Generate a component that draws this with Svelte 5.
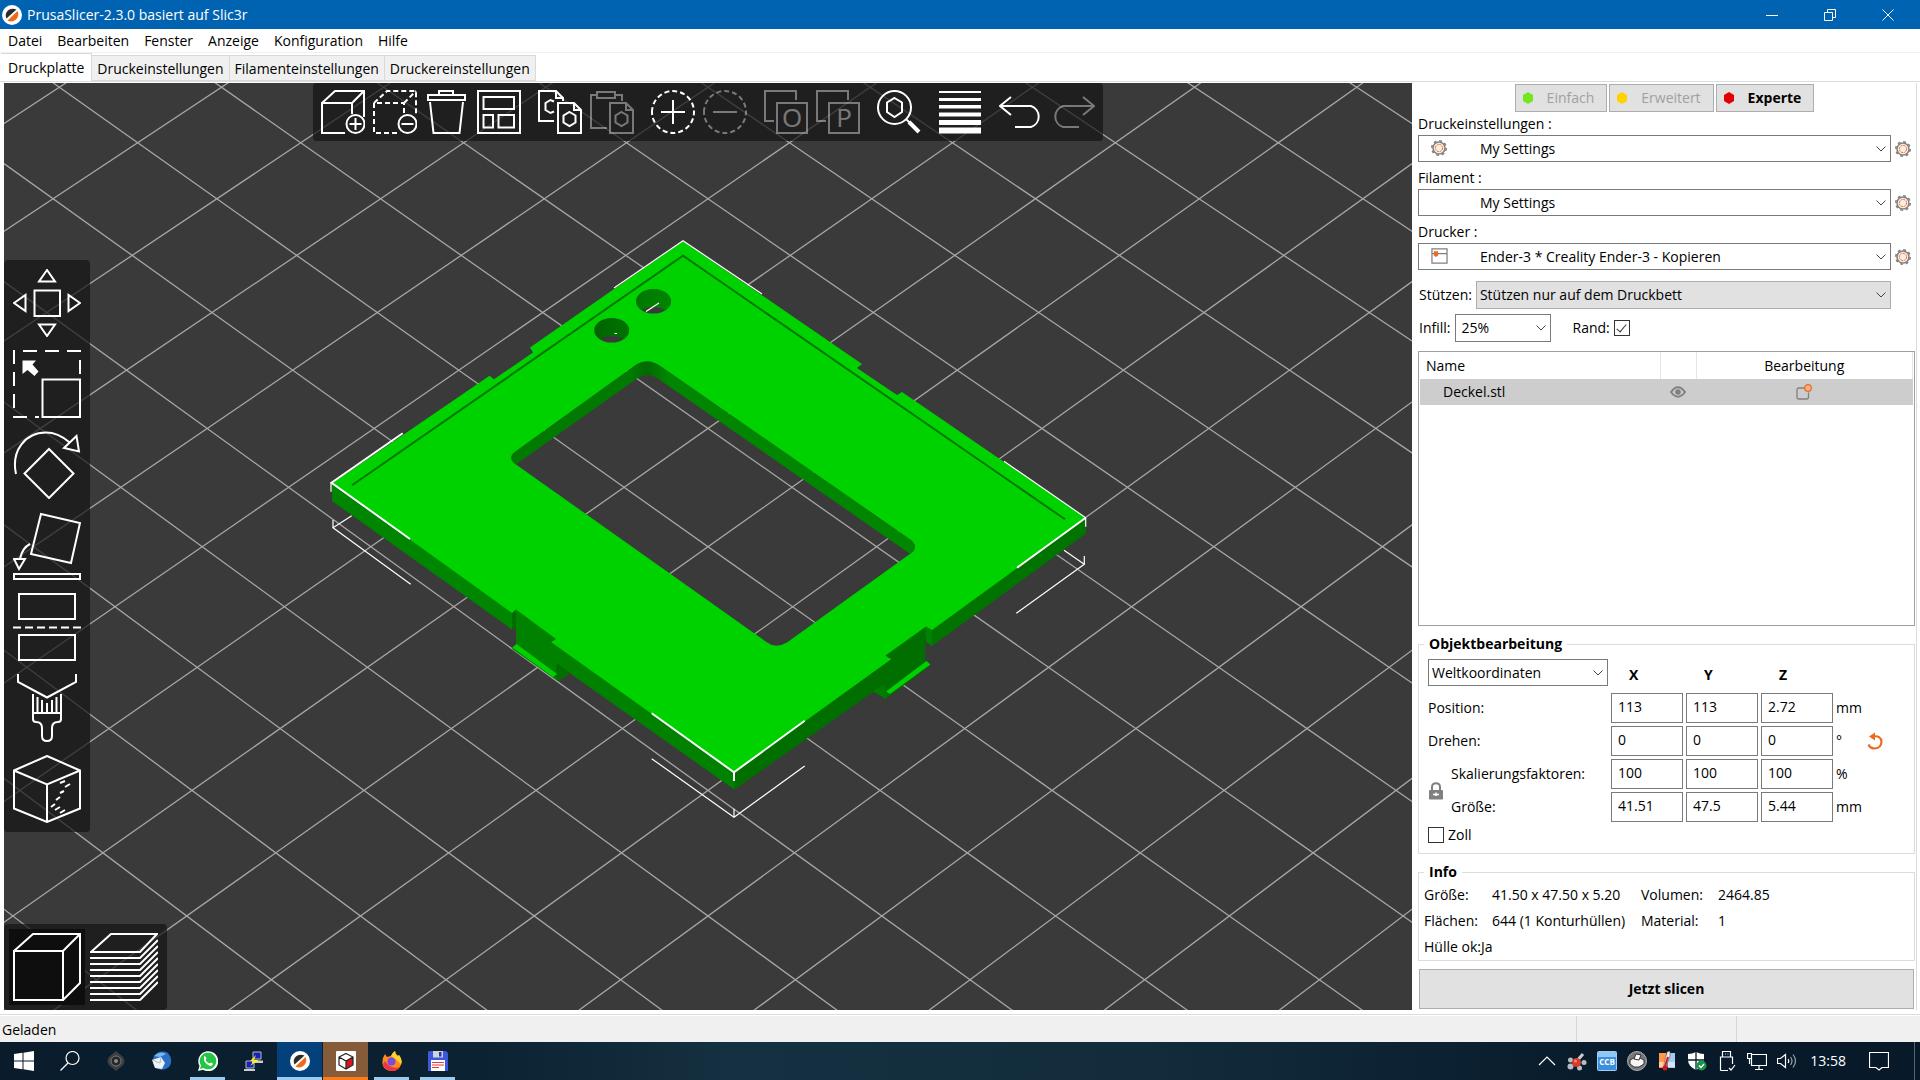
<script lang="ts">
	type Stroke = { d: string; dash?: string; fill?: boolean; heavy?: boolean };
	type Tool = { name: string; strokes: Stroke[]; off?: boolean; letter?: string };

	const menus = ['Datei', 'Bearbeiten', 'Fenster', 'Anzeige', 'Konfiguration', 'Hilfe'];
	const tabs = ['Druckplatte', 'Druckeinstellungen', 'Filamenteinstellungen', 'Druckereinstellungen'];

	let activeTab = $state('Druckplatte');
	let mode = $state('Experte');
	let support = $state('Stützen nur auf dem Druckbett');
	let infill = $state('25%');
	let brim = $state(true);
	let inches = $state(false);

	const modes = [
		{ name: 'Einfach', color: '#73e61e' },
		{ name: 'Erweitert', color: '#ffd200' },
		{ name: 'Experte', color: '#e30000' }
	];

	const presets = [
		{ id: 'print', label: 'Druckeinstellungen :', value: 'My Settings', icon: 'gear' },
		{ id: 'filament', label: 'Filament :', value: 'My Settings', icon: '' },
		{ id: 'printer', label: 'Drucker :', value: 'Ender-3 * Creality Ender-3 - Kopieren', icon: 'printer' }
	];

	const axes = ['X', 'Y', 'Z'];
	let rows = $state([
		{ label: 'Position:', values: ['113', '113', '2.72'], unit: 'mm' },
		{ label: 'Drehen:', values: ['0', '0', '0'], unit: '°' },
		{ label: 'Skalierungsfaktoren:', values: ['100', '100', '100'], unit: '%' },
		{ label: 'Größe:', values: ['41.51', '47.5', '5.44'], unit: 'mm' }
	]);

	// print bed grid, seen from a corner: k runs down the screen, u across it
	function bedPoint(u: number, k: number) {
		const w = 1 - 0.00496 * k;
		return [708 + (168.6 * u) / w, (546.7 + 57 * k) / w];
	}

	function bedLine(n: number, dir: number) {
		const [x1, y1] = bedPoint(n - dir * 5, -10);
		const [x2, y2] = bedPoint(n + dir * 5, 10);
		return `M${x1.toFixed(1)} ${y1.toFixed(1)}L${x2.toFixed(1)} ${y2.toFixed(1)}`;
	}

	let grid = '';
	for (let n = -12; n <= 12; n++) {
		grid += bedLine(n, 1) + bedLine(n, -1);
	}

	const outline =
		'M683 241L862 364L857 368L897 395L902 392L1086 518L932 630L926 626.5L885.5 655.5L890.7 659.5L734 772.5L551 642L556 639L516 609.5L512 613L332 483.5L489.5 375.7L494 379.3L533 352.5L530 347.5Z';
	const cutout =
		'M637 364Q648 357.500 660 365.700L911 540Q918 546 913 551.700L787 642.500Q776 649 767 642.500L513.500 462.700Q508 457 515 451.700Z';
	const holes =
		'M636 301.300a17.500 12.300 0 1 0 35 0a17.500 12.300 0 1 0 -35 0ZM594.200 330.300a17.500 12.300 0 1 0 35 0a17.500 12.300 0 1 0 -35 0Z';

	const doc = 'M20 13H36L43 20V43H20ZM36 13V20H43M31.5 22L37.5 25.5V32.5L31.5 36L25.5 32.5V25.5Z';

	const topGroups: Tool[][] = [
		[
			{ name: 'Hinzufügen', strokes: [{ d: 'M24 43H1V13H31V24M1 13L14 1H43V27M31 13L43 1M43.500 34a9 9 0 1 1 -18 0a9 9 0 1 1 18 0M28.500 34H40.500M34.500 28V40' }] },
			{ name: 'Löschen', strokes: [{ d: 'M24 43H1V13H31V24M1 13L14 1H43V25M31 13L43 1', dash: '5 3' }, { d: 'M43.500 34a9 9 0 1 1 -18 0a9 9 0 1 1 18 0M28.500 34H40.500' }] },
			{ name: 'Alle löschen', strokes: [{ d: 'M3 5H40V10H3ZM14 5V1H28V5M5 12L8.500 43H34.500L38 12' }] },
			{ name: 'Anordnen', strokes: [{ d: 'M1 1H43V43H1ZM6.500 7H37V19H6.500ZM6.500 25H16V37.500H6.500ZM21.500 25H37V37.500H21.500Z' }] }
		],
		[
			{ name: 'Kopieren', strokes: [{ d: 'M16 31H1V1H18L25 8V11M18 1V8H25M16 11.500L12.500 10L7.500 13V20L12.500 23L16 21.500' }, { d: doc }] },
			{ name: 'Einfügen', off: true, strokes: [{ d: 'M17 38H1V5H7M25 5H32V11M7 2H25V8H7Z' }, { d: doc }] }
		],
		[
			{ name: 'Instanz hinzufügen', strokes: [{ d: 'M1 22a21 21 0 1 1 42 0a21 21 0 1 1 -42 0', dash: '5 3' }, { d: 'M10 22H34M22 10V34' }] },
			{ name: 'Instanz entfernen', off: true, strokes: [{ d: 'M1 22a21 21 0 1 1 42 0a21 21 0 1 1 -42 0', dash: '5 3' }, { d: 'M10 22H34' }] }
		],
		[
			{ name: 'In Objekte trennen', off: true, letter: 'O', strokes: [{ d: 'M10 31H1V1H32V10M13 13H43V43H13Z' }] },
			{ name: 'In Teile trennen', off: true, letter: 'P', strokes: [{ d: 'M10 31H1V1H32V10M13 13H43V43H13Z' }] }
		],
		[{ name: 'Suche', strokes: [{ d: 'M1 17.500a16.500 16.500 0 1 1 33 0a16.500 16.500 0 1 1 -33 0M17.500 8L25 12.500V22L17.500 27L10 22V12.500ZM29 29L33 33' }, { d: 'M32 32L42 42', heavy: true }] }],
		[{ name: 'Variable Schichthöhe', strokes: [{ d: 'M1 1H43V3H1ZM1 8H43V11H1ZM1 15H43V18.500H1ZM1 22.500H43V26.500H1ZM1 30H43V35H1ZM1 37.500H43V43.500H1Z', fill: true }] }],
		[
			{ name: 'Rückgängig', strokes: [{ d: 'M12 7L1 16L12 25M1 16H32a11 11 0 0 1 0 21H16' }] },
			{ name: 'Wiederholen', off: true, strokes: [{ d: 'M32 7L43 16L32 25M43 16H12a11 11 0 0 0 0 21H28' }] }
		]
	];

	const sideTools: Tool[] = [
		{ name: 'Bewegen', strokes: [{ d: 'M21.500 21.500H47V47H21.500ZM34 1L26 12.500H42ZM34 67L26 55.500H42ZM1 34L12.500 26V42ZM67 34L55.500 26V42Z' }] },
		{ name: 'Skalieren', strokes: [{ d: 'M67 24V1H1V67H26', dash: '14 8' }, { d: 'M29.500 29.500H67V67H29.500Z' }, { d: 'M9.500 10.500H23L19.500 14.500L25.500 21.500L21.500 26L14.500 20L9.500 24Z', fill: true }] },
		{ name: 'Drehen', strokes: [{ d: 'M36 18L60.500 42.500L36 67L11.500 42.500ZM3 43C-2 20 12 1.500 33 1.500C42 1.500 49 5 56 11M63.500 5L51 17L66 20.500Z' }] },
		{ name: 'Auf Fläche legen', strokes: [{ d: 'M28 2L67 11L58 51L18 42ZM17 32Q9 36 7 47M1 47H12L6 57ZM1 62H67V67H1Z' }] },
		{ name: 'Schneiden', strokes: [{ d: 'M6 1H62V26H6ZM6 42H62V67H6Z' }, { d: 'M0 34.500H68', dash: '8 4' }] },
		{ name: 'Aufmalen', strokes: [{ d: 'M5 0V8L34 23.500L63 8V0M20 20V45Q20 48 23 48Q29 48 29 54V62Q29 67 34 67Q39 67 39 62V54Q39 48 45 48Q48 48 48 45V20M20 39H48M24.500 23V39M29 26V39M34 29V39M39 26V39M43.500 23V39' }] },
		{ name: 'Naht', strokes: [{ d: 'M34 1L67 15.500V53.500L34 67L1 53.500V15.500ZM1 15.500L34 29.500L67 15.500M34 29.500V67M47 28L52 26M52 32L57 29M47 38L51 36M43 45L47 42M38 52L42 49M42 55L47 52M47 58L52 55' }] }
	];

	const slabs = [25, 31, 37, 43, 49, 55, 61, 67].map((y) => `M0 ${y}H50L68 ${y - 18}`).join('');
</script>

{#snippet chevron()}
	<svg class="chevron" viewBox="0 0 10 6" aria-hidden="true"><path d="M.5 .5L5 5L9.5 .5" /></svg>
{/snippet}

{#snippet gear()}
	<svg class="gear" viewBox="0 0 16 16" aria-hidden="true">
		<circle cx="8" cy="8" r="7.200" fill="none" stroke="#808080" stroke-width="1.600" stroke-dasharray="2.800 2.850" />
		<circle cx="8" cy="8" r="6" fill="#fbeee6" stroke="#808080" stroke-width="1.500" />
		<circle cx="8" cy="8" r="3.600" fill="none" stroke="#ed6b21" stroke-dasharray="2 .8" />
	</svg>
{/snippet}

{#snippet prusa()}
	<svg viewBox="0 0 20 20" aria-hidden="true">
		<circle cx="10" cy="10" r="10" fill="#fff" />
		<path d="M4.500 13.500C1.500 7 8 1.500 14.500 4.500Z" fill="#2b2b2b" />
		<path d="M5.500 15.500C12 19 18.500 12 15.500 6Z" fill="#ed6b21" />
	</svg>
{/snippet}

{#snippet toolIcon(tool: Tool, size: number)}
	<svg viewBox="0 0 {size} {size}" aria-hidden="true">
		{#each tool.strokes as s}
			<path d={s.d} stroke-dasharray={s.dash} class:solid={s.fill} class:heavy={s.heavy} />
		{/each}
		{#if tool.letter}
			<text x="28" y="37" text-anchor="middle">{tool.letter}</text>
		{/if}
	</svg>
{/snippet}

<div class="desktop">
	<header class="titlebar">
		<span class="logo">{@render prusa()}</span>
		<span class="title">PrusaSlicer-2.3.0 basiert auf Slic3r</span>
		<div class="window-buttons">
			<button aria-label="Minimieren"><svg viewBox="0 0 12 12"><path d="M0 6.500H12" /></svg></button>
			<button aria-label="Verkleinern"><svg viewBox="0 0 12 12"><path d="M.5 3.500H8.500V11.500H.5ZM3.500 3.500V.5H11.500V8.500H8.500" /></svg></button>
			<button aria-label="Schließen"><svg viewBox="0 0 12 12"><path d="M.5 .5L11.500 11.500M11.500 .5L.5 11.500" /></svg></button>
		</div>
	</header>

	<nav class="menubar">
		{#each menus as item}
			<button>{item}</button>
		{/each}
	</nav>

	<div class="tabs" role="tablist">
		{#each tabs as tab}
			<button role="tab" aria-selected={tab === activeTab} class:active={tab === activeTab} onclick={() => (activeTab = tab)}>{tab}</button>
		{/each}
	</div>

	<main>
		<section class="viewport">
			<svg class="scene" viewBox="4 83 1408 927" preserveAspectRatio="xMidYMid slice" role="img" aria-label="Deckel.stl">
				<defs>
					<clipPath id="cut"><path d={cutout} /></clipPath>
					<clipPath id="bores"><path d={holes} /></clipPath>
					<linearGradient id="wall" gradientUnits="userSpaceOnUse" x1="632" y1="0" x2="668" y2="0">
						<stop offset="0" stop-color="#007a00" />
						<stop offset=".4" stop-color="#006a00" />
						<stop offset="1" stop-color="#008600" />
					</linearGradient>
					<linearGradient id="bore" x1="0" x2="1">
						<stop offset="0" stop-color="#006400" />
						<stop offset="1" stop-color="#008600" />
					</linearGradient>
				</defs>
				<path class="grid" d={grid} />

				<!-- side walls -->
				<path fill="#008500" d="M332 483L512 612V629.500L332 501Z" />
				<path fill="#006f00" d="M512 612L517 609V627L512 629.500Z" />
				<path fill="#008100" d="M516 609L557 639L551 641L735 772V790L568 672L568 675L558 681L512 649L516 644Z" />
				<path fill="#006f00" d="M557 663L568 672V675L558 681L555 677Z" />
				<path fill="#00d200" d="M512.300 647.500L516.500 644L557 674L553 677Z" />
				<path fill="#007300" d="M1086 517V533.500L932 646V629Z" />
				<path fill="#008300" d="M925 626L932 629V646L926 642Z" />
				<path fill="#006f00" d="M926 626L885 655L891 659L734 772V790L873 692L886 698.500L930 666L925 660Z" />
				<path fill="#007d00" d="M873 691L884 685L887 698L885 698.500Z" />
				<path fill="#00d200" d="M886 691.500L926.500 661L930.300 664.500L890 694Z" />

				<g clip-path="url(#cut)">
					<path fill="url(#wall)" fill-rule="evenodd" d="{cutout}M637 378.500Q648 371 660 380L911 554.500Q918 560 913 566L787 657Q776 663 767 657L513.500 475.500Q508 470 515 465Z" />
				</g>
				<g clip-path="url(#bores)">
					<path fill="url(#bore)" fill-rule="evenodd" d="{holes}M636 319.300a17.500 12.300 0 1 0 35 0a17.500 12.300 0 1 0 -35 0ZM594.200 348.300a17.500 12.300 0 1 0 35 0a17.500 12.300 0 1 0 -35 0Z" />
				</g>
				<path fill="#00d200" fill-rule="evenodd" d="{outline}{cutout}{holes}" />
				<path fill="none" stroke="#007800" stroke-width="2" d="M352 485.300L683 255.700L1065 519.300" />

				<path class="bounds" d="M614 288L683 240.700L762 294M1004 461.300L1085.700 517.700V526.700M331 491.700V483M646 311.500L659 303M614.500 333.500H617" />
				<path class="bounds near" d="M402.700 433.300L331.500 482.700L410 539M1085.700 517.700L1017 567.700M651.700 713.300L734 772.300L804.700 720.700M734 772V781" />
				<path class="bounds" d="M351.700 515.700L333 527.700L410.700 584.300M333 527.700V520M1064 550.300L1084.300 564.300L1016.300 613.300M1084.300 564.300V556M651.700 758.700L734 817.300L804.700 766M734 817.300V808.700" />
			</svg>

			<div class="toolbar top">
				{#each topGroups as group}
					<div class="group">
						{#each group as tool}
							<button aria-label={tool.name} disabled={tool.off}>{@render toolIcon(tool, 44)}</button>
						{/each}
					</div>
				{/each}
			</div>

			<div class="toolbar side">
				{#each sideTools as tool}
					<button aria-label={tool.name}>{@render toolIcon(tool, 68)}</button>
				{/each}
			</div>

			<div class="toolbar views">
				<button class="current" aria-label="3D-Editoransicht">
					<svg viewBox="0 0 68 68"><path d="M1 18H50V67H1ZM1 18L20 1H67V50L50 67M50 18L67 1" /></svg>
				</button>
				<button aria-label="Vorschau">
					<svg viewBox="0 0 68 68"><path d="M1 19L21 1H67L50 19Z{slabs}" /></svg>
				</button>
			</div>
		</section>

		<aside class="panel">
			<div class="presets">
				<div class="modes">
					{#each modes as m}
						<button class:chosen={m.name === mode} onclick={() => (mode = m.name)}>
							<svg viewBox="0 0 12 12" fill={m.color} aria-hidden="true"><path d="M6 0L11 3V9L6 12L1 9V3Z" /></svg>
							{m.name}
						</button>
					{/each}
				</div>

				{#each presets as preset}
					<label class="preset-label" for={preset.id}>{preset.label}</label>
					<div class="preset">
						<div class="combo">
							{#if preset.icon === 'gear'}
								<span class="combo-icon">{@render gear()}</span>
							{:else if preset.icon === 'printer'}
								<span class="combo-icon">
									<svg viewBox="0 0 18 17" aria-hidden="true"><path d="M1 1H17V16H1ZM1 6H17" fill="none" stroke="#808080" stroke-width="1.300" /><path d="M3 3.500H7.500V8L5.200 9.500L3 8Z" fill="#ed6b21" /></svg>
								</span>
							{/if}
							<select id={preset.id} class="indent"><option>{preset.value}</option></select>
							{@render chevron()}
						</div>
						<button class="edit" aria-label="Bearbeiten">{@render gear()}</button>
					</div>
				{/each}

				<div class="line support">
					<label for="support">Stützen:</label>
					<div class="combo grey">
						<select id="support" bind:value={support}>
							<option>Keine</option>
							<option>Stützen nur auf dem Druckbett</option>
							<option>Überall</option>
						</select>
						{@render chevron()}
					</div>
				</div>
				<div class="line">
					<label for="infill">Infill:</label>
					<div class="combo infill">
						<select id="infill" bind:value={infill}>
							<option>15%</option>
							<option>20%</option>
							<option>25%</option>
						</select>
						{@render chevron()}
					</div>
					<label class="check brim">Rand:<input type="checkbox" bind:checked={brim} /></label>
				</div>
			</div>

			<div class="objects">
				<table>
					<thead>
						<tr><th class="name">Name</th><th class="eye"></th><th>Bearbeitung</th></tr>
					</thead>
					<tbody>
						<tr>
							<td class="name">Deckel.stl</td>
							<td class="eye">
								<svg viewBox="0 0 16 12" aria-label="Sichtbar"><path d="M1 6Q8 -3.500 15 6Q8 15.500 1 6Z" fill="none" stroke="#808080" stroke-width="2" /><circle cx="8" cy="6" r="2.800" fill="#808080" /></svg>
							</td>
							<td>
								<svg viewBox="0 0 16 16" aria-label="Bearbeiten"><path d="M8.500 4H3Q1 4 1 6V13Q1 15 3 15H10.500Q12.500 15 12.500 13V8.500" fill="none" stroke="#808080" stroke-width="1.300" /><circle cx="12" cy="4" r="3.300" fill="#f7b58f" stroke="#ed6b21" stroke-width="1.300" /></svg>
							</td>
						</tr>
					</tbody>
				</table>
			</div>

			<fieldset>
				<legend>Objektbearbeitung</legend>
				<div class="manipulation">
					<div class="combo coords">
						<select aria-label="Koordinaten"><option>Weltkoordinaten</option></select>
						{@render chevron()}
					</div>
					{#each axes as axis}
						<b>{axis}</b>
					{/each}
					{#each rows as row, i}
						{#if i === 2}
							<button class="lock" aria-label="Seitenverhältnis sperren">
								<svg viewBox="0 0 16 18"><path d="M4 8V5Q4 1.200 8 1.200Q12 1.200 12 5V8" fill="none" stroke="#808080" stroke-width="2" /><rect x="1" y="8" width="14" height="9.500" rx="1" fill="#808080" /><path d="M5 12.500H11M8 10.500V14" stroke="#fff" stroke-width="1.500" /></svg>
							</button>
						{/if}
						<span class="row-label" class:wide={i < 2}>{row.label}</span>
						{#each axes as axis, a}
							<input class="number" type="text" aria-label="{row.label} {axis}" bind:value={row.values[a]} />
						{/each}
						<span class="unit">{row.unit}</span>
						{#if i === 1}
							<button class="reset" aria-label="Drehung zurücksetzen">
								<svg viewBox="0 0 16 18"><path d="M6 4.500Q14 3 14.500 10Q14 16 8 16.500Q3 16.500 1.500 12.500" fill="none" stroke="#ed6b21" stroke-width="2.200" /><path d="M2 4.500L8 .5V8.500Z" fill="#ed6b21" /></svg>
							</button>
						{/if}
					{/each}
				</div>
				<label class="check inches"><input type="checkbox" bind:checked={inches} />Zoll</label>
			</fieldset>

			<fieldset>
				<legend>Info</legend>
				<dl>
					<dt>Größe:</dt><dd>41.50 x 47.50 x 5.20</dd><dt>Volumen:</dt><dd>2464.85</dd>
					<dt>Flächen:</dt><dd>644 (1 Konturhüllen)</dd><dt>Material:</dt><dd>1</dd>
					<div><dt>Hülle ok:</dt><dd>Ja</dd></div>
				</dl>
			</fieldset>

			<button class="slice">Jetzt slicen</button>
		</aside>
	</main>

	<div class="statusbar"><span>Geladen</span><i></i><i></i></div>

	<footer class="taskbar">
		<button aria-label="Start"><svg viewBox="0 0 20 20"><path fill="#fff" d="M0 3L8.500 1.800V9.500H0ZM9.500 1.700L20 0V9.500H9.500ZM0 10.500H8.500V18.200L0 17ZM9.500 10.500H20V20L9.500 18.300Z" /></svg></button>
		<button aria-label="Suchen"><svg viewBox="0 0 20 20" class="thin"><circle cx="12.500" cy="7" r="6.500" /><path d="M8 12L.5 19.500" /></svg></button>
		<button aria-label="Inkscape"><svg viewBox="0 0 20 20"><path d="M10 0L17 6Q20 10 17 14L10 20L3 14Q0 10 3 6Z" fill="#3e4144" /><circle cx="10" cy="10" r="5" fill="#24272a" stroke="#777" /><circle cx="10" cy="10" r="2" fill="#8a8a8a" /></svg></button>
		<button aria-label="Thunderbird"><svg viewBox="0 0 20 20"><path d="M2 5Q8 -2 16 2Q22 9 17 16Q11 21 4 17Q-1 11 2 5Z" fill="#2b6fc4" /><path d="M2 5Q8 -1 14 3L8 6Z" fill="#75b6ee" /><path d="M0 9L9 6L13 12L10 18L3 17Z" fill="#eef2f7" /><path d="M0 9L8 12L9 6" fill="none" stroke="#a9b9ca" /></svg></button>
		<button class="open" aria-label="WhatsApp"><svg viewBox="0 0 20 20"><path d="M0 20L1.500 15A10 10 0 1 1 5 18.700Z" fill="#fff" /><path d="M2 18L3 14.500A8.300 8.300 0 1 1 5.500 17Z" fill="#25c545" /><path d="M6 5.500Q7.500 4.500 8.500 7.500L7.500 9Q9 12 11.500 12.500L13 11.500L15 12.800Q14.500 15.500 11.500 14.800Q5 12 6 5.500Z" fill="#fff" /></svg></button>
		<button aria-label="PuTTY"><svg viewBox="0 0 20 20"><path d="M9 1H17V8H9ZM2 10H10V17H2Z" fill="#1522b8" stroke="#bbb" /><path d="M8 9.500H19V12H8ZM0 18H11V20H0Z" fill="#ccc" /><path d="M12 4L6 10H10L6 15L15 9H10Z" fill="#ffee21" /></svg></button>
		<button class="open prusa" aria-label="PrusaSlicer">{@render prusa()}</button>
		<button class="open viewer" aria-label="3D-Betrachter"><svg viewBox="0 0 20 20"><rect width="20" height="20" rx="1" fill="#fff" /><path d="M10 10L17 6.500V13.500L10 18Z" fill="#d8141c" /><path d="M10 2.500L17 6V14L10 18L3 14V6ZM3 6L10 10L17 6M10 10V18" fill="none" stroke="#222" stroke-width="1.200" /></svg></button>
		<button class="open" aria-label="Firefox"><svg viewBox="0 0 20 20"><path d="M3 3L5 6Q8 5 9 5Q10 2 13 0Q13 3 16 5L17 4Q21 9 19 14Q16 20 10 20Q2 20 .5 13Q0 7 3 3Z" fill="#ff8b1a" /><path d="M13 0Q13 3 16 5L17 4Q21 9 19 13Q15 9 9 5Q10 2 13 0Z" fill="#ffd32a" /><path d="M1 13Q3 20 10 20Q15 20 18 16Q9 19 3 10Z" fill="#f0334d" /><circle cx="9.500" cy="10.500" r="4" fill="#7a4be0" /></svg></button>
		<button class="open" aria-label="Speichern"><svg viewBox="0 0 20 20"><path d="M1 0H18L20 2V20H0V1Z" fill="#3e57dc" /><path d="M5 0H15V6.500H5Z" fill="#cfd3da" /><path d="M11 1H13.500V5.500H11Z" fill="#2438a8" /><path d="M3 9H17V20H3Z" fill="#fff" /><path d="M4 11.500H16M4 14H16M4 16.500H11" stroke="#e03a3a" /></svg></button>

		<div class="tray">
			<button aria-label="Ausgeblendete Symbole"><svg viewBox="0 0 20 20" class="thin"><path d="M2 14L10 6L18 14" /></svg></button>
			<button aria-label="Molekül"><svg viewBox="0 0 20 20"><path d="M9 11L16 3" stroke="#c9ced3" stroke-width="3" /><g fill="#b9bdc2"><circle cx="3.500" cy="9" r="2.500" /><circle cx="3.500" cy="15.500" r="3" /><circle cx="12.500" cy="17" r="2.500" /><circle cx="17" cy="11.500" r="2.500" /></g><circle cx="9.500" cy="11.500" r="4.500" fill="#d63a2b" /><circle cx="8.500" cy="10" r="1.500" fill="#f08a7a" /></svg></button>
			<button aria-label="CCB"><svg viewBox="0 0 20 20"><rect x=".5" y=".5" width="19" height="19" rx="1" fill="#3c8fdc" stroke="#9dcdf7" /><path d="M1 1H19V6H1Z" fill="#8fc7f5" /><text x="10" y="14" text-anchor="middle" class="ccb">CCB</text></svg></button>
			<button aria-label="Drucker"><svg viewBox="0 0 20 20"><circle cx="10" cy="10" r="9.500" fill="#77797b" stroke="#aaa" /><path d="M3 9L7 7H13L17 9V13L12 16H7L3 13Z" fill="#f5f5f5" stroke="#333" /><path d="M7 8L9 3L14 4L12 9Z" fill="#fff" stroke="#333" /></svg></button>
			<button aria-label="Temperatur"><svg viewBox="0 0 20 20"><path d="M2 2H9V17H2Z" fill="#ff9847" /><path d="M11 2H18V17H11Z" fill="#a8c8ee" /><path d="M2 11H18V16H2Z" fill="#fff" opacity=".5" /><path d="M10 1L13 0V5L9 16H7V13Z" fill="#eee" stroke="#555" stroke-width=".6" /><path d="M11 6L8 15" stroke="#d01818" stroke-width="2" /><circle cx="8" cy="17" r="2.500" fill="#d01818" /></svg></button>
			<button aria-label="Sicherheit"><svg viewBox="0 0 20 20"><path d="M9 1Q13 3 17 3V9Q17 15 9 19Q1 15 1 9V3Q5 3 9 1Z" fill="#fff" /><path d="M9 1V19M1 9H17" stroke="#0a1c2b" stroke-width="1.300" /><circle cx="14.500" cy="14.500" r="5" fill="#17954c" /><path d="M12 14.500L14 16.500L17 13" fill="none" stroke="#fff" stroke-width="1.300" /></svg></button>
			<button aria-label="USB"><svg viewBox="0 0 20 20" class="thin"><path d="M5.500 6V.5H13.500V6M3.500 19.500V6H15.500V13M3.500 19.500H11M8 3H8.800M10.500 3H11.300M12 17L14 19L18 14" /></svg></button>
			<button aria-label="Netzwerk"><svg viewBox="0 0 20 20" class="thin"><path d="M5 3.500H19.500V14.500H4.500V8M12 14.500V18M8 18.500H16M.5 2.500H4.500V7.500H.5ZM2.500 7.500V13" /></svg></button>
			<button aria-label="Lautsprecher"><svg viewBox="0 0 20 20" class="thin"><path d="M.5 7.500H3.500L8.500 3.500V16.500L3.500 12.500H.5ZM11 8Q12.500 10 11 12" /><path opacity=".6" d="M13.500 6Q16.500 10 13.500 14M16 3.500Q21 10 16 16.500" /></svg></button>
			<time>13:58</time>
			<button class="notices" aria-label="Benachrichtigungen"><svg viewBox="0 0 20 20" class="thin"><path d="M.5 1.500H19.500V16.500H13L10 19L7 16.500H.5Z" /></svg></button>
		</div>
	</footer>
</div>

<style>
	:global(body) {
		background: #fff;
	}

	.desktop {
		display: flex;
		flex-direction: column;
		min-height: 100vh;
		background: #fff;
		color: #000;
		font-family: 'Open Sans', 'Noto Sans', sans-serif;
		font-size: 14px;
		line-height: 20px;
	}

	button,
	input,
	select {
		box-sizing: border-box;
		margin: 0;
		padding: 0;
		border: 0;
		border-radius: 0;
		background: none;
		color: inherit;
		font: inherit;
	}
	svg {
		display: block;
	}

	.titlebar {
		display: flex;
		align-items: center;
		height: 29px;
		padding: 0 3px 0 2px;
		background: #0063b1;
		color: #fff;
	}
	.logo {
		width: 20px;
		margin-right: 5px;
	}
	.window-buttons {
		display: flex;
		margin-left: auto;
	}
	.window-buttons button {
		display: grid;
		place-items: center;
		width: 58px;
		height: 29px;
	}
	.window-buttons svg {
		width: 12px;
		fill: none;
		stroke: #fff;
	}

	.menubar {
		display: flex;
		gap: 15px;
		box-sizing: border-box;
		height: 24px;
		padding-left: 8px;
		border-bottom: 1px solid #f0f0f0;
	}

	.tabs {
		display: flex;
		align-items: flex-end;
		height: 28px;
		padding-left: 1px;
		border-bottom: 1px solid #dcdcdc;
	}
	.tabs button {
		height: 26px;
		padding: 2px 5px 0;
		border: 1px solid #d9d9d9;
		border-left: 0;
		background: #f0f0f0;
	}
	.tabs .active {
		height: 28px;
		padding: 0 7px;
		border-bottom: 0;
		background: #fff;
	}

	main {
		display: flex;
		flex: 1;
		padding: 1px 3px 4px 4px;
		border-bottom: 1px solid #dcdcdc;
	}

	.viewport {
		position: relative;
		flex: 1;
		overflow: hidden;
		background: #3a3a3a;
	}
	.scene {
		position: absolute;
		inset: 0;
		width: 100%;
		height: 100%;
	}
	.grid {
		fill: none;
		stroke: #a6a6a6;
		stroke-width: 1.3;
	}
	.bounds {
		fill: none;
		stroke: #fff;
		stroke-width: 1.2;
	}
	.near {
		stroke-width: 2;
	}

	.toolbar {
		position: absolute;
		display: flex;
		border-radius: 4px;
		background: rgba(20, 20, 20, 0.7);
	}
	.toolbar svg {
		width: 100%;
		fill: none;
		stroke: #fff;
		stroke-width: 2;
	}
	.toolbar .solid {
		fill: #fff;
		stroke: none;
	}
	.toolbar .heavy {
		stroke-width: 4;
	}
	.toolbar text {
		fill: #fff;
		stroke: none;
		font-size: 26px;
	}
	.top {
		top: 0;
		left: 50%;
		gap: 17px;
		padding: 7px 8px;
		transform: translateX(-50%);
	}
	.group {
		display: flex;
		gap: 8px;
	}
	.top button {
		width: 44px;
		height: 44px;
	}
	.top button:disabled {
		opacity: 0.4;
	}
	.side {
		top: 177px;
		left: 0;
		flex-direction: column;
		gap: 13px;
		padding: 9px;
	}
	.side button {
		width: 68px;
		height: 68px;
	}
	.views {
		bottom: 0;
		left: 0;
		gap: 1px;
		padding: 5px;
	}
	.views button {
		width: 76px;
		height: 76px;
		padding: 4px;
	}
	.views .current {
		background: #0e0e0e;
	}

	.panel {
		display: flex;
		flex: 0 0 505px;
		flex-direction: column;
		box-sizing: border-box;
		padding: 1px 0 1px 6px;
		border-right: 1px solid #dcdcdc;
	}
	.presets {
		padding-right: 5px;
	}
	.modes {
		display: flex;
		justify-content: center;
		gap: 2px;
		margin-bottom: 1px;
	}
	.modes button {
		display: flex;
		align-items: center;
		gap: 13px;
		height: 28px;
		padding: 0 12px 0 6px;
		border: 1px solid #adadad;
		background: #e1e1e1;
		color: #a0a0a0;
	}
	.modes .chosen {
		color: #000;
		font-weight: bold;
	}
	.modes svg {
		width: 12px;
	}

	.preset-label {
		display: block;
		line-height: 22px;
	}
	.preset {
		display: flex;
		gap: 4px;
		margin-bottom: 5px;
	}
	.gear {
		width: 16px;
		height: 16px;
	}
	.edit {
		width: 16px;
	}
	.combo {
		position: relative;
		flex: 1;
	}
	.combo select {
		display: block;
		width: 100%;
		height: 27px;
		padding: 0 24px 0 3px;
		border: 1px solid #7a7a7a;
		background: #fff;
		appearance: none;
	}
	.combo .indent {
		padding-left: 61px;
	}
	.combo.grey select {
		height: 28px;
		border-color: #adadad;
		background: #e1e1e1;
	}
	.combo-icon {
		position: absolute;
		top: 5px;
		left: 13px;
		width: 17px;
	}
	.chevron {
		position: absolute;
		top: 50%;
		right: 5px;
		width: 10px;
		margin-top: -3px;
		fill: none;
		stroke: #444;
		pointer-events: none;
	}

	.line {
		display: flex;
		align-items: center;
		gap: 4px;
		margin-bottom: 9px;
		padding-left: 1px;
	}
	.support {
		margin: 11px 20px 5px 0;
	}
	.combo.infill {
		flex: 0 0 96px;
	}
	.infill select {
		height: 28px;
		padding-left: 6px;
	}
	.check {
		display: flex;
		align-items: center;
		gap: 4px;
	}
	.brim {
		margin-left: 18px;
	}
	.check input {
		display: grid;
		place-items: center;
		width: 16px;
		height: 16px;
		border: 1px solid #333;
		background: #fff;
		appearance: none;
	}
	.check input:checked::after {
		content: '';
		width: 4px;
		height: 9px;
		margin-top: -3px;
		border: solid #333;
		border-width: 0 1px 1px 0;
		transform: rotate(40deg);
	}

	.objects {
		flex: 1;
		margin-right: 1px;
		padding: 0 1px;
		border: 1px solid #a0a0a0;
	}
	table {
		width: 100%;
		border-collapse: collapse;
		table-layout: fixed;
	}
	th {
		height: 27px;
		padding: 0;
		border-right: 1px solid #e5e5e5;
		font-weight: normal;
	}
	td {
		height: 26px;
		padding: 0;
	}
	tbody tr {
		background: #cdcdcd;
	}
	.name {
		width: 240px;
		box-sizing: border-box;
		padding-left: 6px;
		text-align: left;
	}
	td.name {
		padding-left: 23px;
	}
	.eye {
		width: 35px;
	}
	td svg {
		width: 16px;
		margin: 0 auto;
	}

	fieldset {
		min-width: 0;
		margin: 8px 1px 0 0;
		padding: 0;
		border: 1px solid #dcdcdc;
	}
	legend {
		margin-left: 5px;
		padding: 0 5px;
		font-weight: bold;
	}
	.manipulation {
		display: grid;
		grid-template-columns: 20px 157px repeat(3, 72px) 28px 16px;
		gap: 3px;
		align-items: center;
		padding: 5px 9px 0;
	}
	.coords {
		grid-row: 1;
		grid-column: 1 / 3;
		margin-bottom: 4px;
	}
	.manipulation b {
		grid-row: 1;
		padding-left: 18px;
	}
	.row-label {
		grid-column: 2;
	}
	.row-label.wide {
		grid-column: 1 / 3;
	}
	.lock {
		grid-row: 4 / 6;
		grid-column: 1;
		width: 16px;
	}
	.number {
		width: 100%;
		height: 30px;
		padding: 0 6px 3px;
		border: 1px solid #7a7a7a;
		background: #fff;
	}
	.reset {
		grid-column: 7;
	}
	.inches {
		padding: 5px 9px 10px;
		line-height: 16px;
	}

	dl {
		display: grid;
		grid-template-columns: 68px 149px 77px 1fr;
		margin: 0;
		padding-left: 5px;
		line-height: 26px;
	}
	dl div {
		display: flex;
		grid-column: 1 / 5;
	}
	dd {
		margin: 0;
	}

	.slice {
		height: 40px;
		margin: 8px 2px 0 1px;
		border: 1px solid #adadad;
		background: #e1e1e1;
		font-weight: bold;
	}

	.statusbar {
		display: flex;
		height: 26px;
		padding-left: 2px;
		border-top: 1px solid #fff;
		background: #f0f0f0;
		line-height: 28px;
	}
	.statusbar span {
		flex: 1;
	}
	.statusbar i {
		width: 159px;
		border-left: 1px solid #d7d7d7;
	}
	.statusbar i:last-child {
		width: 183px;
	}

	.taskbar {
		display: flex;
		gap: 1px;
		height: 38px;
		padding-left: 1px;
		background: linear-gradient(90deg, #0a1c2b, #0b2233 25%, #153040 38%, #122c3c 60%, #081a2a 85%);
		color: #fff;
	}
	.taskbar button {
		display: grid;
		place-items: center;
		width: 45px;
	}
	.taskbar svg {
		width: 20px;
		height: 20px;
	}
	.thin {
		fill: none;
		stroke: #fff;
		stroke-width: 1.2;
	}
	.taskbar .open {
		background: linear-gradient(#9ccbf0, #9ccbf0) center bottom / 35px 3px no-repeat;
	}
	.taskbar .prusa {
		background-color: #04417a;
		background-size: 100% 3px;
	}
	.taskbar .viewer {
		border-bottom: 3px solid #ff7a12;
		background: #855b3a;
		padding-top: 3px;
	}
	.tray {
		display: flex;
		align-items: center;
		margin-left: auto;
		margin-right: 5px;
		padding-right: 12px;
		border-right: 1px solid #56636d;
	}
	.taskbar .tray button {
		width: 30px;
	}
	.tray .ccb {
		fill: #fff;
		font-size: 8px;
		font-weight: bold;
	}
	.tray time {
		margin: 0 10px 0 8px;
	}
	.taskbar .tray .notices {
		width: 46px;
	}
</style>
